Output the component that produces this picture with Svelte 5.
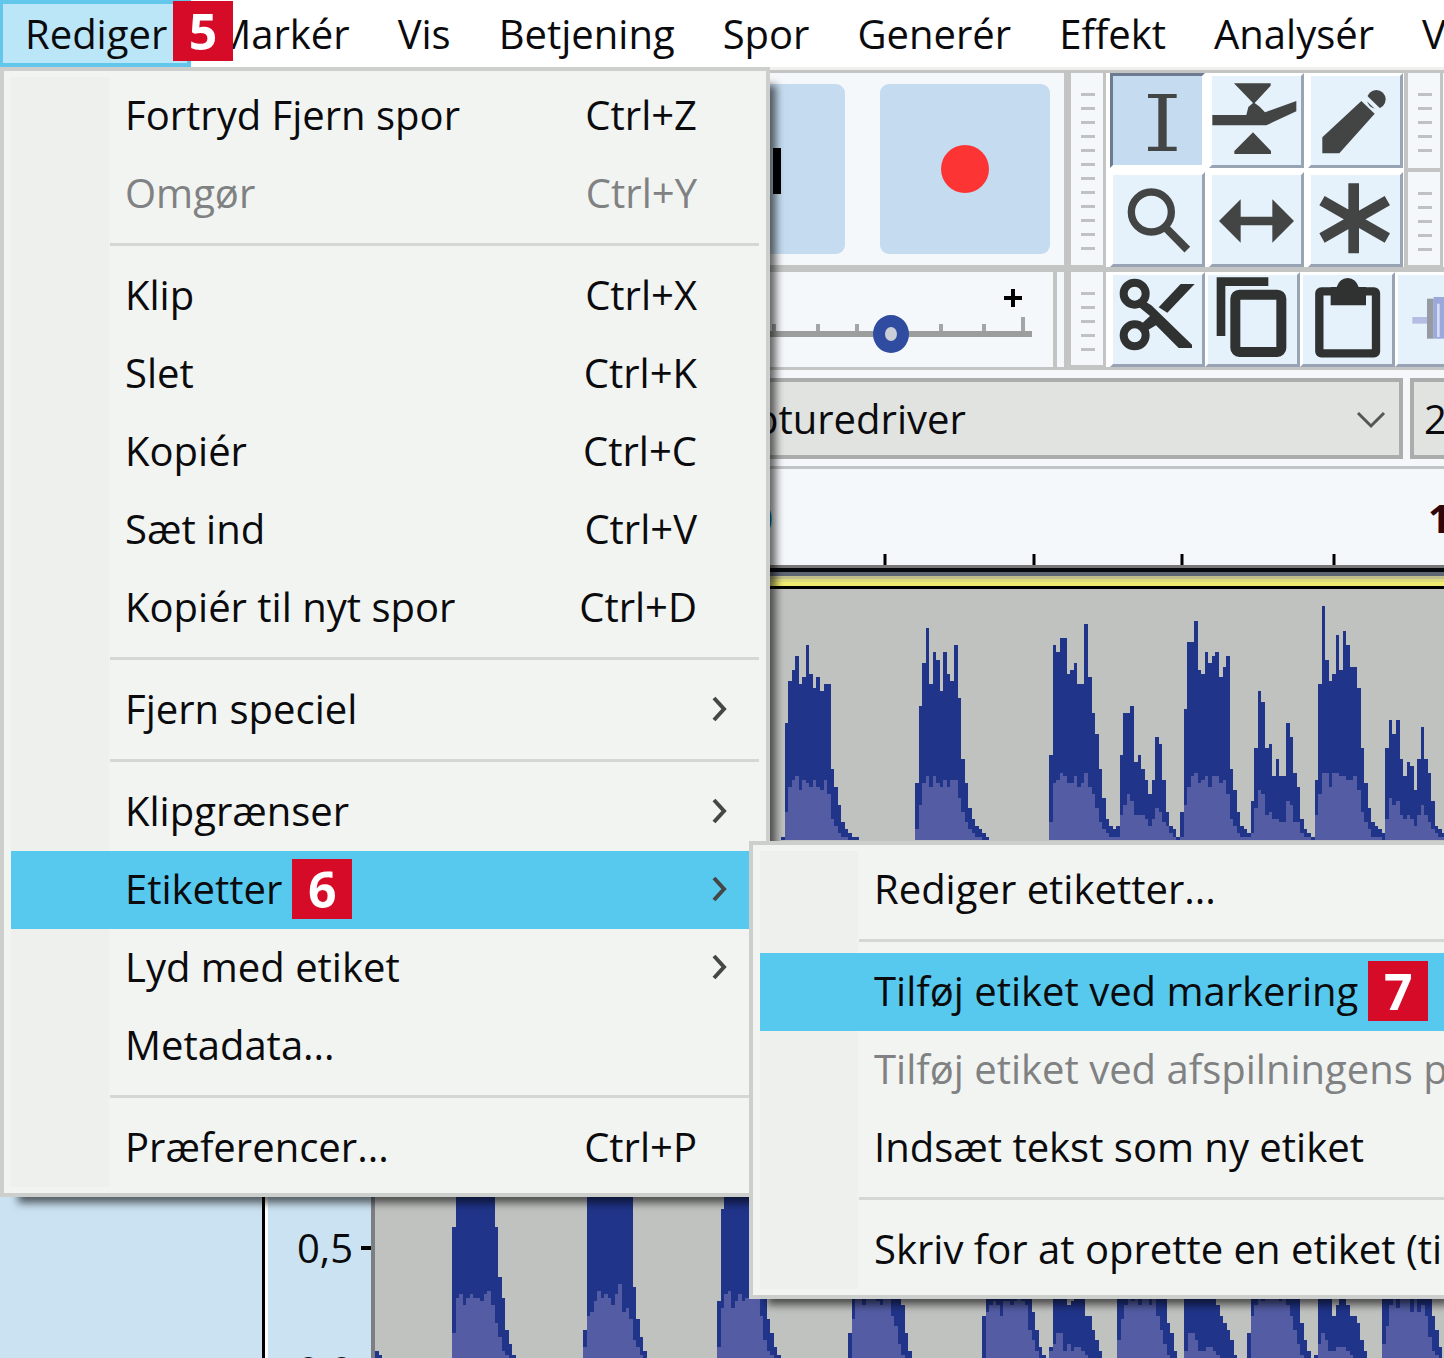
<script lang="ts">
  interface MenuEntry {
    label?: string;
    keys?: string;
    more?: boolean;
    active?: boolean;
    disabled?: boolean;
    step?: string;
  }

  interface Clip {
    x: number;
    base: number;
    peak: number[];
    rms: number[];
  }

  const menus = ['Markér', 'Vis', 'Betjening', 'Spor', 'Generér', 'Effekt', 'Analysér', 'Væ'];

  const editMenu: MenuEntry[] = [
    { label: 'Fortryd Fjern spor', keys: 'Ctrl+Z' },
    { label: 'Omgør', keys: 'Ctrl+Y', disabled: true },
    {},
    { label: 'Klip', keys: 'Ctrl+X' },
    { label: 'Slet', keys: 'Ctrl+K' },
    { label: 'Kopiér', keys: 'Ctrl+C' },
    { label: 'Sæt ind', keys: 'Ctrl+V' },
    { label: 'Kopiér til nyt spor', keys: 'Ctrl+D' },
    {},
    { label: 'Fjern speciel', more: true },
    {},
    { label: 'Klipgrænser', more: true },
    { label: 'Etiketter', more: true, active: true, step: '6' },
    { label: 'Lyd med etiket', more: true },
    { label: 'Metadata...' },
    {},
    { label: 'Præferencer...', keys: 'Ctrl+P' },
  ];

  const labelMenu: MenuEntry[] = [
    { label: 'Rediger etiketter...' },
    {},
    { label: 'Tilføj etiket ved markering', active: true, step: '7' },
    { label: 'Tilføj etiket ved afspilningens p', disabled: true },
    { label: 'Indsæt tekst som ny etiket' },
    {},
    { label: 'Skriv for at oprette en etiket (til' },
  ];

  // one sample is a column 3.54 wide, heights are in the same unit
  const unit = 3.54;
  const full = (n: number, h: number): number[] => Array(n).fill(h);

  const clips: Clip[] = [
    {
      x: 781, base: 840,
      peak: [1, 33, 45, 48, 52, 44, 46, 55, 47, 43, 46, 42, 44, 44, 20, 15, 10, 5, 3, 2, 1, 1],
      rms: [0, 8, 15, 17, 18, 14, 17, 16, 15, 17, 15, 14, 17, 13, 6, 4, 2, 1, 1],
    },
    {
      x: 915, base: 840,
      peak: [16, 38, 50, 60, 44, 53, 51, 42, 53, 47, 45, 55, 40, 23, 16, 9, 6, 4, 3, 2, 1],
      rms: [3, 10, 16, 18, 15, 18, 16, 15, 17, 15, 17, 17, 12, 8, 5, 3, 2, 1, 1],
    },
    {
      x: 1049, base: 840,
      peak: [
        24, 55, 53, 57, 57, 47, 48, 50, 44, 44, 61, 46, 36, 30, 20, 12, 6, 4, 3, 4,
        24, 36, 36, 38, 22, 24, 20, 17, 13, 17, 29, 27, 17, 8, 4, 3, 1, 8,
        37, 56, 56, 62, 48, 47, 53, 50, 52, 53, 46, 49, 52, 20, 14, 8, 4, 3, 2, 11,
        26, 42, 39, 26, 27, 18, 23, 18, 18, 33, 29, 19, 15, 6, 3, 2, 1,
        17, 44, 66, 51, 45, 47, 58, 48, 59, 55, 49, 49, 43, 26, 16, 9, 5, 4, 3, 2,
        26, 34, 30, 34, 23, 18, 22, 21, 14, 23, 32, 23, 19, 11, 4, 3, 2,
      ],
      rms: [
        5, 16, 17, 19, 18, 16, 16, 18, 15, 16, 19, 15, 13, 9, 5, 3, 2, 1, 1, 1,
        7, 10, 13, 11, 7, 7, 7, 6, 4, 6, 9, 8, 5, 4, 2, 1, 0, 1,
        10, 15, 18, 19, 16, 17, 18, 15, 18, 18, 16, 17, 13, 6, 4, 2, 1, 1, 1, 2,
        9, 14, 13, 7, 8, 6, 6, 5, 5, 11, 10, 5, 5, 2, 1, 1, 0,
        7, 13, 19, 19, 15, 19, 19, 18, 18, 17, 17, 18, 14, 8, 5, 3, 1, 1, 1, 0,
        6, 12, 10, 11, 7, 6, 7, 6, 4, 7, 10, 7, 5, 3, 2, 1, 1,
      ],
    },
    { x: 375, base: 1358, peak: [2, 1], rms: [0] },
    {
      x: 452, base: 1358,
      peak: [37, ...full(11, 46), 37, 23, 17, 8, 4, 1],
      rms: [7, 17, 18, 15, 17, 18, 17, 17, 16, 18, 19, 15, 10, 6, 2, 1],
    },
    {
      x: 583, base: 1358,
      peak: [8, ...full(13, 46), 20, 11, 6, 2],
      rms: [3, 12, 13, 16, 19, 17, 18, 17, 15, 18, 21, 13, 14, 11, 5, 3, 1],
    },
    {
      x: 717, base: 1358,
      peak: [16, 42, ...full(11, 46), 20, 11, 7, 3, 1],
      rms: [3, 14, 18, 19, 14, 16, 18, 16, 17, 17, 17, 17, 12, 5, 2, 1],
    },
    {
      x: 848, base: 1358,
      peak: [7, ...full(14, 20), 15, 7, 2],
      rms: [0, 11, 17, 18, 15, 17, 18, 17, 16, 15, 17, 17, 12, 9, 4, 1],
    },
    {
      x: 982, base: 1358,
      peak: [12, ...full(13, 20), 13, 8, 3, 1, 0, 3, 20, 20, 20, 20, 15, 16, 20, 20, 20, 12, 12, 8, 5, 2],
      rms: [0, 13, 15, 16, 15, 12, 16, 16, 15, 16, 17, 16, 15, 8, 5, 2, 0, 0, 0, 2, 4, 7, 7, 2, 4, 2, 3, 3, 2, 1],
    },
    {
      x: 1117, base: 1358,
      peak: [...full(14, 20), 10, 7, 2, 0, 0, 20, 20, 20, 20, 17, 20, 20, 17, 20, 15, 12, 10, 8, 5, 1],
      rms: [5, 11, 15, 17, 16, 17, 15, 17, 17, 15, 18, 12, 8, 4, 1, 0, 0, 0, 0, 2, 7, 7, 5, 2, 2, 3, 3, 2, 1],
    },
    {
      x: 1247, base: 1358,
      peak: [7, ...full(14, 20), 10, 5, 2, 0, 1, 20, 20, 20, 20, 12, 15, 20, 20, 15, 12, 12, 10, 5, 2],
      rms: [0, 12, 15, 17, 16, 17, 18, 17, 17, 16, 17, 15, 12, 8, 4, 1, 0, 0, 0, 0, 4, 7, 5, 2, 2, 3, 3, 3, 2, 1],
    },
    {
      x: 1382, base: 1358,
      peak: [...full(14, 20), 12, 8, 3],
      rms: [4, 9, 15, 17, 14, 17, 18, 17, 13, 17, 13, 15, 12, 6, 2, 1],
    },
  ];

  function outline(clip: Clip, values: number[]): string {
    let d = `M${clip.x} ${clip.base}`;
    values.forEach((v, i) => {
      d += `V${(clip.base - v * unit).toFixed(1)}H${(clip.x + (i + 1) * unit).toFixed(1)}`;
    });
    return d + `V${clip.base}Z`;
  }
</script>

{#snippet entries(list: MenuEntry[])}
  {#each list as item}
    {#if item.label}
      <button class="entry" class:active={item.active} disabled={item.disabled}>
        <span class="label">{item.label}{#if item.step}<b class="step">{item.step}</b>{/if}</span>
        {#if item.keys}<span>{item.keys}</span>{/if}
        <span class="arrow">
          {#if item.more}
            <svg width="18" height="28" viewBox="0 0 18 28"><path d="M3 3L13 14L3 25" /></svg>
          {/if}
        </span>
      </button>
    {:else}
      <div class="separator" role="separator"></div>
    {/if}
  {/each}
{/snippet}

<div class="window">
  <nav class="menubar">
    <button class="open">Rediger</button>
    {#each menus as name}
      <button>{name}</button>
    {/each}
    <b class="step first">5</b>
  </nav>

  <section class="toolbars">
    <div class="row">
      <div class="transport">
        <button aria-label="Skip">
          <svg width="170" height="170" viewBox="0 0 170 170"><path d="M56 64L92 87L56 110ZM98 64h8v46h-8z" fill="#000" /></svg>
        </button>
        <button aria-label="Record">
          <svg width="170" height="170" viewBox="0 0 170 170"><circle cx="85" cy="85" r="24" fill="#fc3534" /></svg>
        </button>
      </div>
      <div class="grip"><i></i></div>
      <div class="tools">
        <button class="pressed" aria-label="Selection">
          <svg viewBox="0 0 285 285"><path d="M114 63H200V75H170V221H200V234H114V221H145V75H114Z" /></svg>
        </button>
        <button aria-label="Envelope">
          <svg viewBox="0 0 285 285"><path d="M75 31H185V38L137 90L152 101L168 118L262 84V115L172 157H10V126H112L118 102L132 90L82 38ZM132 178L186 234V243H76V234Z" /></svg>
        </button>
        <button aria-label="Draw">
          <svg viewBox="0 0 285 285">
            <path d="M43 193L160 84L200 122L94 241H43Z" />
            <circle cx="205" cy="79" r="28" />
            <path d="M166 66L222 120" stroke="#e6f2fb" stroke-width="12" />
          </svg>
        </button>
        <button aria-label="Zoom">
          <svg viewBox="0 0 285 285"><circle cx="124" cy="120" r="60" class="line" stroke-width="22" /><path d="M168 168L232 233" class="line" stroke-width="24" /></svg>
        </button>
        <button aria-label="Time shift">
          <svg viewBox="0 0 285 285"><path d="M30 147L95 82V134H190V82L255 147L190 212V160H95V212Z" /></svg>
        </button>
        <button aria-label="Multi">
          <svg viewBox="0 0 285 285"><path d="M137 34V244M42 86L238 198M42 198L238 86" class="line" stroke-width="32" /></svg>
        </button>
      </div>
      <div class="meters">
        <div class="grip"><i></i></div>
        <div class="grip"><i></i></div>
      </div>
      <div class="rest"></div>
    </div>

    <div class="row">
      <div class="speed">
        <svg class="plus" width="18" height="18" viewBox="0 0 18 18"><path d="M9 0V18M0 9H18" /></svg>
        <svg class="scale" width="280" height="15" viewBox="0 0 280 15">
          <path d="M22 7V15M66 7V15M105 7V15M189 7V15M232 7V15M271 0V15" />
        </svg>
        <input type="range" min="0" max="100" value="69" aria-label="Speed" />
      </div>
      <div class="blank"></div>
      <div class="grip"><i></i></div>
      <div class="edit">
        <button aria-label="Cut">
          <svg viewBox="0 0 285 285">
            <circle cx="74" cy="65" r="33" class="line" stroke-width="24" />
            <circle cx="74" cy="190" r="33" class="line" stroke-width="24" />
            <path d="M98 84L124 100L246 218V228H206L138 160L104 180L90 160L120 132L88 106Z" />
            <path d="M146 106L212 36H254L172 122Z" />
          </svg>
        </button>
        <button aria-label="Copy">
          <svg viewBox="0 0 285 285">
            <path d="M48 192V29H190" class="line" stroke-width="26" />
            <rect x="91" y="68" width="138" height="172" rx="12" class="line" stroke-width="30" />
          </svg>
        </button>
        <button aria-label="Paste">
          <svg viewBox="0 0 285 285">
            <rect x="58" y="58" width="170" height="186" rx="6" class="line" stroke-width="25" />
            <path fill-rule="evenodd" d="M92 45H110Q118 20 143 18Q168 20 176 45H198V100H92ZM134 48V68H154V48Z" />
          </svg>
        </button>
        <button aria-label="Trim">
          <svg viewBox="0 0 285 285"><path d="M52 145H96" stroke="#b4bde4" stroke-width="20" /><path d="M96 80h20v120H96z" fill="#969aa2" /><path d="M116 75h64v125h-64z" fill="#9ba8dc" /><path d="M126 95h8v100h-8z" fill="#d5def5" /></svg>
        </button>
      </div>
    </div>
  </section>

  <section class="devices">
    <div class="driver">
      <select aria-label="Input device"><option>pturedriver</option></select>
      <svg width="30" height="18" viewBox="0 0 30 18"><path d="M2 2L15 15L28 2" /></svg>
    </div>
    <select class="channels" aria-label="Channels"><option>2</option></select>
  </section>

  <section class="timeline">
    <svg width="1444" height="96" viewBox="0 0 1444 96">
      <path d="M885 85V96M1034 85V96M1182 85V96M1334 85V96" />
      <text x="750" y="64" fill="#08799c">0</text>
      <text x="1428" y="64" fill="#31060b">1</text>
    </svg>
  </section>

  <section class="track">
    <div class="panel"></div>
    <div class="levels">
      <div class="level">0,5<i></i></div>
      <div class="level">0,0<i></i></div>
    </div>
    <div class="wave">
      <svg width="1069" height="769" viewBox="375 589 1069 769" shape-rendering="crispEdges">
        {#each clips as clip}
          <path d={outline(clip, clip.peak)} fill="#203489" />
          <path d={outline(clip, clip.rms)} fill="#545da4" />
        {/each}
      </svg>
    </div>
  </section>

  <div class="popup main">{@render entries(editMenu)}</div>
  <div class="popup sub">{@render entries(labelMenu)}</div>
</div>

<style>
  :global(body) {
    margin: 0;
  }

  .window {
    position: relative;
    display: flex;
    flex-direction: column;
    min-height: 100vh;
    overflow: hidden;
    background: #f5f8fb;
    color: #0b0b0e;
    font: 40px/48px "Open Sans", "Noto Sans", sans-serif;
  }

  button,
  select {
    font: inherit;
    color: inherit;
    border: 0;
    border-radius: 0;
    padding: 0;
    margin: 0;
    background: none;
  }

  svg {
    display: block;
  }

  .menubar {
    display: flex;
    height: 67px;
    background: #fff;
    white-space: nowrap;
  }
  .menubar button {
    flex: none;
    box-sizing: border-box;
    padding: 0 24px;
  }
  .menubar .open {
    border: 4px solid #63c7ec;
    border-left-width: 3px;
    padding: 0 20px 0 22px;
    background: #bae6f8;
  }

  .step {
    display: inline-block;
    width: 60px;
    height: 60px;
    background: #d60b27;
    color: #fff;
    font-size: 50px;
    font-weight: 700;
    line-height: 60px;
    text-align: center;
  }
  .step.first {
    position: absolute;
    left: 173px;
    top: 1px;
  }

  .toolbars {
    display: flex;
    flex-direction: column;
    gap: 5px;
    padding: 3px 0;
    border-top: 3px solid #f0f1ef;
    background: #c3c5c4;
  }
  .row {
    display: flex;
  }
  .transport {
    display: flex;
    justify-content: flex-end;
    gap: 35px;
    box-sizing: border-box;
    width: 1064px;
    padding: 11px 14px;
    background: #f5f8fb;
    border-bottom: 2px solid #c3c5c4;
  }
  .transport button {
    width: 170px;
    height: 170px;
    border-radius: 9px;
    background: #c5dbef;
  }
  .grip {
    box-sizing: border-box;
    width: 32px;
    margin-left: 7px;
    padding: 20px 8px 14px 10px;
    background: #f5f8fb;
  }
  .grip i {
    display: block;
    height: 100%;
    background: repeating-linear-gradient(#c0c2c2 0 3px, transparent 3px 14px);
  }
  .row > .grip {
    margin-right: 3px;
    border-bottom: 2px solid #c3c5c4;
  }
  .tools {
    display: grid;
    grid-template-columns: repeat(3, 95px);
    grid-auto-rows: 95px;
    gap: 4px;
    padding: 0 1px 0 4px;
    background: #fff;
  }
  .edit {
    display: flex;
    flex: 1;
    padding-left: 4px;
    background: #fff;
    overflow: hidden;
  }
  .tools button,
  .edit button {
    flex: none;
    box-sizing: border-box;
    width: 95px;
    height: 95px;
    border: 3px solid #98a3b3;
    border-top-color: #fff;
    border-left-color: #fff;
    background: #e6f2fb;
  }
  .tools .pressed {
    border-color: #6c7b92 #fff #fff #6c7b92;
    background: #c5dbf0;
  }
  .tools svg,
  .edit svg {
    width: 95px;
    height: 95px;
    margin: -3px;
    fill: #424544;
  }
  .edit svg {
    fill: #2f3231;
  }
  .line {
    fill: none;
    stroke: #424544;
  }
  .edit .line {
    stroke: #2f3231;
  }
  .meters {
    display: grid;
    grid-template-rows: 95px 1fr;
    gap: 4px;
    margin: 0 3px 0 -3px;
    padding-bottom: 2px;
  }
  .rest {
    flex: 1;
    background: #f5f8fb;
  }

  .speed {
    display: flex;
    flex-direction: column;
    align-items: flex-end;
    box-sizing: border-box;
    width: 1053px;
    height: 95px;
    padding: 17px 21px 0 0;
    background: #f5f8fb;
  }
  .plus {
    margin: 0 10px 10px 0;
    stroke: #000;
    stroke-width: 4px;
  }
  .scale {
    stroke: #a3a6a6;
    stroke-width: 4px;
    margin-bottom: -17px;
  }
  input {
    appearance: none;
    width: 432px;
    height: 38px;
    margin: 0;
    background: linear-gradient(#9b9e9d, #9b9e9d) 0 16px / 100% 6px no-repeat;
  }
  input::-webkit-slider-thumb {
    appearance: none;
    box-sizing: border-box;
    width: 36px;
    height: 38px;
    border: 12px solid #2f4ca0;
    border-radius: 50%;
    background: #c9ced8;
  }
  .blank {
    width: 7px;
    margin-left: 4px;
    background: #f5f8fb;
  }

  .devices {
    display: flex;
    gap: 7px;
    padding: 8px 0 7px;
    border-bottom: 3px solid #c1c4c5;
  }
  .driver {
    position: relative;
    width: 1403px;
  }
  .driver svg {
    position: absolute;
    right: 17px;
    top: 33px;
    fill: none;
    stroke: #555;
    stroke-width: 3px;
  }
  select {
    appearance: none;
    box-sizing: border-box;
    display: block;
    width: 100%;
    height: 81px;
    border: 4px solid #abadac;
    background: #e1e3e1;
    padding-left: 750px;
  }
  .channels {
    flex: 1;
    width: 34px;
    min-width: 0;
    padding-left: 10px;
    border-right: 0;
  }

  .timeline {
    height: 96px;
    border-bottom: 3px solid #777;
    overflow: hidden;
  }
  .timeline path {
    stroke: #000;
    stroke-width: 3px;
  }
  .timeline text {
    font-weight: 700;
  }

  .track {
    display: flex;
    flex: 1;
    border-top: 4px solid #05080c;
    background: #c0c2c0;
    overflow: hidden;
  }
  .panel {
    width: 262px;
    background: #cbe2f2;
    border-right: 3px solid #000;
  }
  .levels {
    box-sizing: border-box;
    width: 110px;
    height: 786px;
    padding-top: 652px;
    border-left: 3px solid #fff;
    border-right: 4px solid #7b7f82;
    background: #cbe2f2;
    overflow: hidden;
  }
  .level {
    display: flex;
    align-items: center;
    justify-content: flex-end;
    gap: 8px;
    height: 48px;
    margin-bottom: 75px;
  }
  .level i {
    width: 10px;
    height: 4px;
    background: #000;
  }
  .wave {
    flex: 1;
    overflow: hidden;
  }
  .wave::before {
    content: "";
    display: block;
    height: 14px;
    background: linear-gradient(#5e6573 0 4px, #c1c08c 4px 7px, #dedb7c 7px 10px, #f1eb70 10px 14px);
    border-bottom: 3px solid #000;
  }

  .popup {
    position: absolute;
    box-sizing: border-box;
    padding: 6px 7px;
    border: 4px solid #cdcfcd;
    background: #f2f4f2;
    box-shadow: 12px 12px 8px -6px rgba(0, 0, 0, 0.6);
    white-space: nowrap;
  }
  .main {
    left: 0;
    top: 67px;
    width: 770px;
  }
  .sub {
    left: 749px;
    right: 0;
    top: 841px;
    padding-right: 0;
    border-right: 0;
  }
  .entry {
    display: flex;
    align-items: center;
    box-sizing: border-box;
    width: 100%;
    height: 78px;
    padding: 0 0 2px 114px;
    text-align: left;
    background: linear-gradient(90deg, #eef0ee 98px, transparent 98px);
  }
  .entry:disabled {
    color: #808182;
  }
  .entry.active {
    background: #57c9ee;
  }
  .label {
    display: flex;
    align-items: center;
    flex: 1;
    gap: 10px;
  }
  .arrow {
    width: 48px;
    padding-left: 14px;
  }
  .arrow path {
    fill: none;
    stroke: #454646;
    stroke-width: 4px;
  }
  .sub .arrow {
    display: none;
  }
  .separator {
    height: 24px;
    background:
      linear-gradient(#d5d7d5, #d5d7d5) 99px 10px / 100% 3px no-repeat,
      linear-gradient(90deg, #eef0ee 98px, transparent 98px);
  }
</style>
